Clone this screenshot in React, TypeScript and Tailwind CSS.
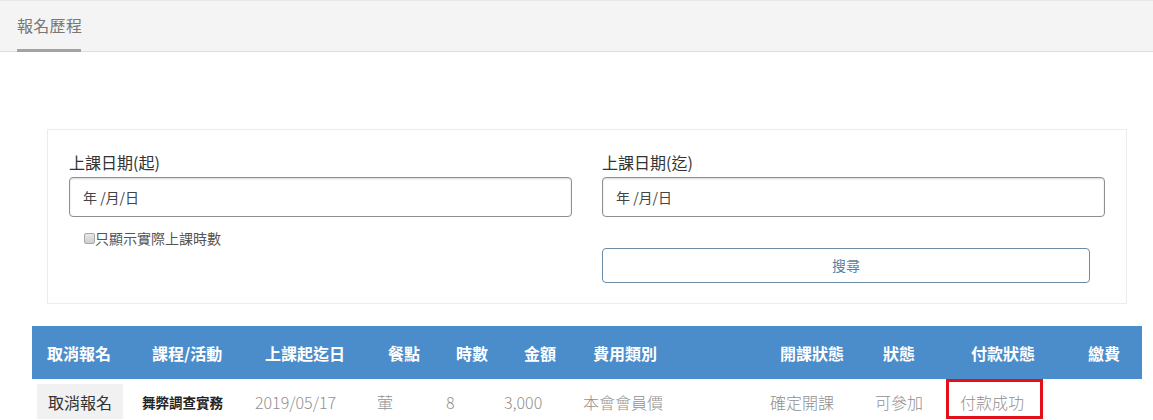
const font = "font-['Noto_Sans_CJK_TC','Noto_Sans',sans-serif]";

const cols = "grid grid-cols-[105px_113px_122px_69px_58px_79px_187px_105px_85px_118px_69px]";

const headers: { label: string; pl: string }[] = [
  { label: "取消報名", pl: "pl-[15px]" },
  { label: "課程/活動", pl: "pl-[15px]" },
  { label: "上課起迄日", pl: "pl-[15px]" },
  { label: "餐點", pl: "pl-[16px]" },
  { label: "時數", pl: "pl-[15px]" },
  { label: "金額", pl: "pl-[25px]" },
  { label: "費用類別", pl: "pl-[15px]" },
  { label: "開課狀態", pl: "pl-[15px]" },
  { label: "狀態", pl: "pl-[13px]" },
  { label: "付款狀態", pl: "pl-[16px]" },
  { label: "繳費", pl: "pl-[15px]" },
];

function DateField({ label }: { label: string }) {
  return (
    <div className="flex flex-col">
      <label className="text-[16px] leading-[22px] text-[#333] mb-[4px]">{label}</label>
      <div className="h-[40px] rounded-[4px] border border-[#8f8f8f] shadow-[inset_0_1px_2px_rgba(0,0,0,0.15)] flex items-center pl-[13px] text-[14px] text-[#444]">
        年&nbsp;/月/日
      </div>
    </div>
  );
}

export default function App() {
  return (
    <div className={`${font} bg-white w-[1153px] h-[420px] overflow-hidden`}>
      {/* Tabs */}
      <div className="h-[52px] bg-[#f4f4f4] border-t border-[#e8e8e8] border-b border-b-[#dcdcdc] flex items-end px-[17px]">
        <div className="h-full flex flex-col justify-between">
          <span className="pt-[13px] text-[16px] leading-[22px] text-[#777] tracking-[0.3px]">報名歷程</span>
          <span className="h-[3px] w-[64px] bg-[#a3a3a3] -mb-[1px]" />
        </div>
      </div>

      {/* Filter */}
      <div className="mt-[77px] mx-[47px] w-[1080px] h-[175px] border border-[#ececec] px-[21px] pt-[21px]">
        <div className="grid grid-cols-[503px_503px] gap-x-[30px]">
          <div>
            <DateField label="上課日期(起)" />
            <div className="mt-[12px] ml-[15px] flex items-center text-[14px] text-[#555] leading-[18px]">
              <span className="w-[11px] h-[11px] border border-[#a8a8a8] rounded-[2px] bg-gradient-to-b from-[#e8e8e8] to-[#cfcfcf]" />
              <span>只顯示實際上課時數</span>
            </div>
          </div>
          <div>
            <DateField label="上課日期(迄)" />
            <button className="mt-[31px] w-[488px] h-[35px] rounded-[4px] border border-[#6a8ba6] text-[14px] text-[#5c82a3] bg-white">
              搜尋
            </button>
          </div>
        </div>
      </div>

      {/* Table */}
      <div className="mt-[22px] ml-[32px] w-[1110px]">
        <div className={`${cols} h-[53px] bg-[#4b8dcb] items-center`}>
          {headers.map((h) => (
            <div key={h.label} className={`${h.pl} text-[16px] font-bold text-white whitespace-nowrap`}>
              {h.label}
            </div>
          ))}
        </div>
        <div className={`${cols} relative h-[45px] items-center text-[16px] text-[#909090] font-light`}>
          <div className="pl-[5px]">
            <button className="w-[86px] h-[35px] bg-[#f1f1f1] text-[#333] text-[16px] font-normal">取消報名</button>
          </div>
          <div className="pl-[5px] text-[13.5px] font-bold text-[#222] pt-[2px]">舞弊調查實務</div>
          <div className="pl-[5px]">2019/05/17</div>
          <div className="pl-[5px]">葷</div>
          <div className="pl-[5px]">8</div>
          <div className="pl-[5px]">3,000</div>
          <div className="pl-[5px]">本會會員價</div>
          <div className="pl-[5px]">確定開課</div>
          <div className="pl-[5px]">可參加</div>
          <div className="pl-[5px]">付款成功</div>
          <div />
          <span className="absolute left-[914px] top-0 w-[97px] h-[40px] border-[3px] border-[#e31018]" />
        </div>
      </div>
    </div>
  );
}
